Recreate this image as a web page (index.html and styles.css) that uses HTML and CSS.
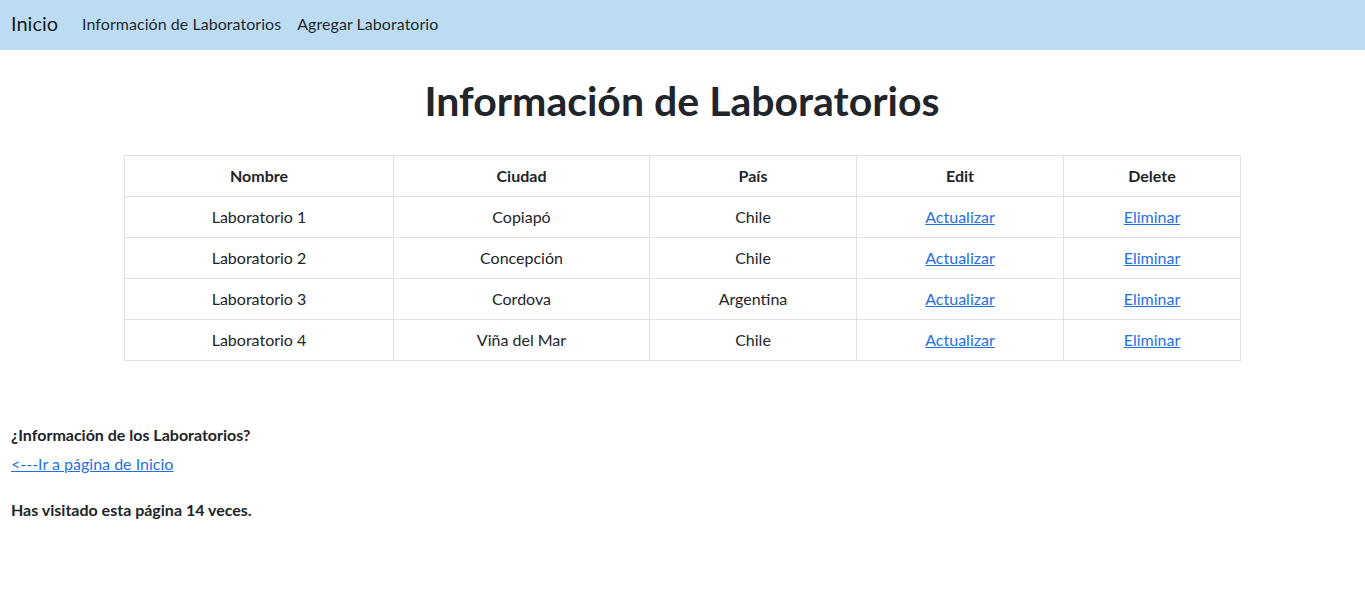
FILE: index.html
```html
<!DOCTYPE html>
<html lang="es">
<head>
<meta charset="utf-8">
<title>Información de Laboratorios</title>
<link rel="stylesheet" href="styles.css">
</head>
<body>
<nav class="navbar">
  <a class="brand" href="#">Inicio</a>
  <a class="nav-link" href="#">Información de Laboratorios</a>
  <a class="nav-link" href="#">Agregar Laboratorio</a>
</nav>
<main class="container">
  <h1 class="title">Información de Laboratorios</h1>
  <table class="table">
    <colgroup>
      <col class="c1"><col class="c2"><col class="c3"><col class="c4"><col class="c5">
    </colgroup>
    <thead>
      <tr><th>Nombre</th><th>Ciudad</th><th>País</th><th>Edit</th><th>Delete</th></tr>
    </thead>
    <tbody>
      <tr><td>Laboratorio 1</td><td>Copiapó</td><td>Chile</td><td><a href="#">Actualizar</a></td><td><a href="#">Eliminar</a></td></tr>
      <tr><td>Laboratorio 2</td><td>Concepción</td><td>Chile</td><td><a href="#">Actualizar</a></td><td><a href="#">Eliminar</a></td></tr>
      <tr><td>Laboratorio 3</td><td>Cordova</td><td>Argentina</td><td><a href="#">Actualizar</a></td><td><a href="#">Eliminar</a></td></tr>
      <tr><td>Laboratorio 4</td><td>Viña del Mar</td><td>Chile</td><td><a href="#">Actualizar</a></td><td><a href="#">Eliminar</a></td></tr>
    </tbody>
  </table>
</main>
<section class="footer-info">
  <h6 class="question">¿Información de los Laboratorios?</h6>
  <p class="back"><a href="#">&lt;---Ir a página de Inicio</a></p>
  <p class="visits">Has visitado esta página 14 veces.</p>
</section>
</body>
</html>
```
FILE: styles.css
```css
* { box-sizing: border-box; }
body {
  margin: 0;
  font-family: Lato, "Open Sans", sans-serif;
  font-size: 16px;
  line-height: 1.5;
  color: #212529;
  background: #fff;
}
a { color: #1f6fe6; text-decoration: underline; }

.navbar {
  height: 50px;
  background: #bbdcf2;
  display: flex;
  align-items: center;
  padding: 0 12px 3px 11px;
}
.brand {
  font-size: 20px;
  line-height: 30px;
  color: rgba(0, 0, 0, 0.9);
  text-decoration: none;
  margin-right: 16px;
  padding-bottom: 1px;
}
.nav-link {
  color: rgba(0, 0, 0, 0.85);
  text-decoration: none;
  padding: 0 8px;
  line-height: 24px;
  letter-spacing: 0.05px;
}

.container {
  width: 1141px;
  margin: 0 auto;
  padding: 0 13px 0 12px;
}
.title {
  margin: 27px 0 0;
  font-size: 41px;
  font-weight: 700;
  line-height: 48px;
  text-align: center;
  color: #212529;
}
.table {
  width: 100%;
  margin-top: 30px;
  border-collapse: collapse;
  table-layout: fixed;
}
.c1 { width: 269px; }
.c2 { width: 256px; }
.c3 { width: 207px; }
.c4 { width: 207px; }
.c5 { width: 177px; }
.table th, .table td {
  border: 1px solid #dee2e6;
  padding: 8px;
  text-align: center;
  line-height: 24px;
}
.table th { font-weight: 700; }

.footer-info {
  padding: 0 12px 0 11px;
  margin-top: 64px;
}
.question {
  margin: 0 0 8px;
  font-size: 16px;
  font-weight: 700;
  line-height: 19px;
}
.back { margin: 0; line-height: 24px; }
.visits {
  margin: 22px 0 0;
  font-weight: 700;
  line-height: 24px;
}
```
